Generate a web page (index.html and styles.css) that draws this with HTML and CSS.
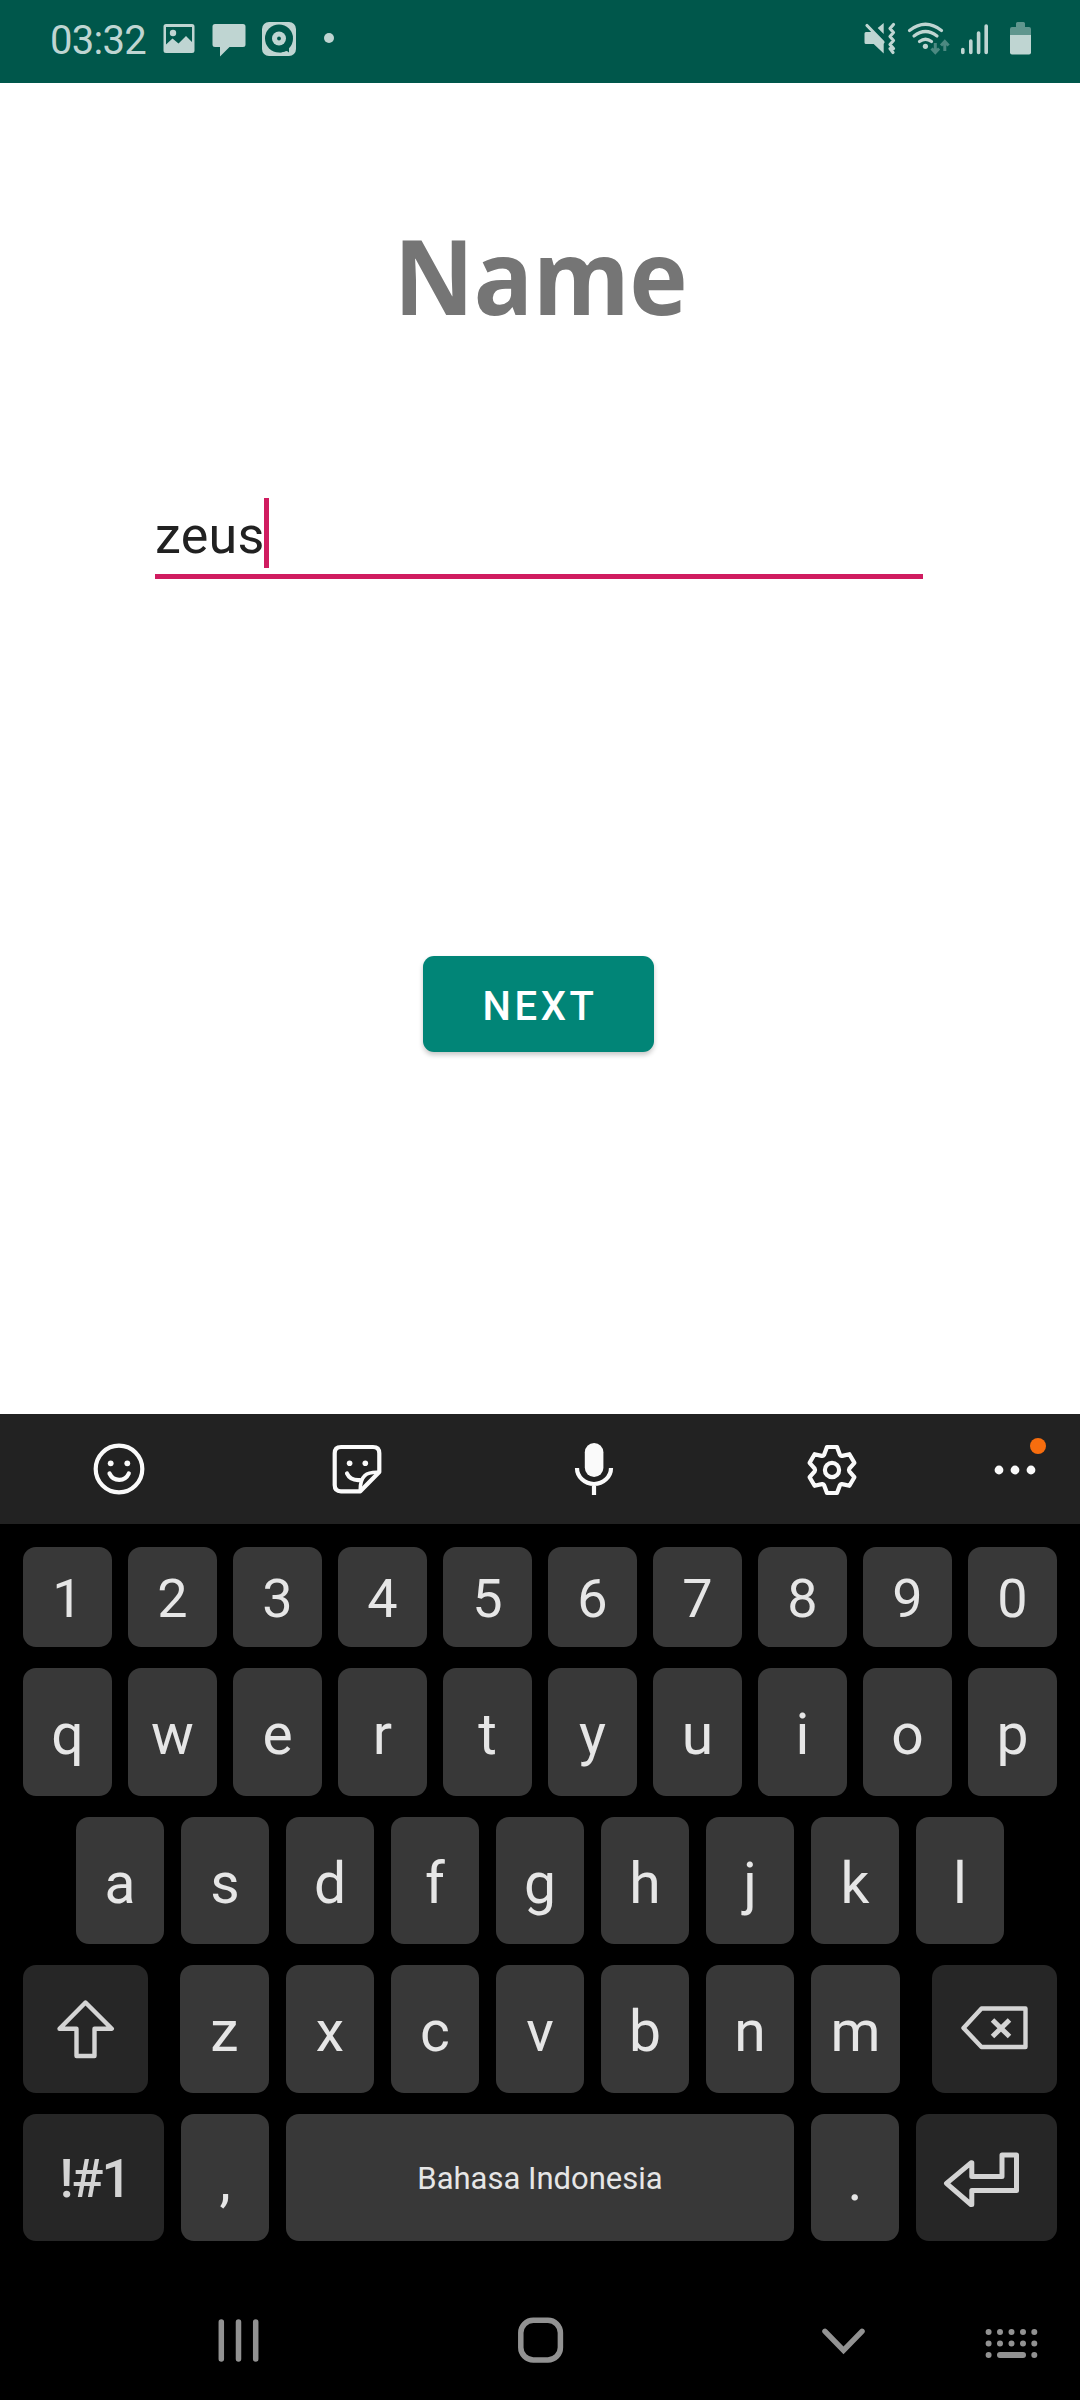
FILE: index.html
```html
<!DOCTYPE html>
<html lang="id">
<head>
<meta charset="utf-8">
<title>Name</title>
<link rel="stylesheet" href="styles.css">
</head>
<body>
<div class="screen">
  <header class="status">
    <span class="clock">03:32</span>
    <svg width="46" height="83" viewBox="158 0 46 83"><path fill-rule="evenodd" d="M166 24h26a2.500 2.500 0 0 1 2.500 2.500v24a2.500 2.500 0 0 1-2.500 2.500h-26a2.500 2.500 0 0 1-2.500-2.500v-24a2.500 2.500 0 0 1 2.500-2.500zM166 27v17.500l6.500-6 6 5 7.500-7.500 6 6v-15z"/><circle cx="173" cy="33" r="3.200"/></svg>
    <svg width="50" height="83" viewBox="204 0 50 83"><path d="M215 24h28a2.500 2.500 0 0 1 2.500 2.500v18a2.500 2.500 0 0 1-2.500 2.500h-13.500l-9.500 9.500v-9.500h-5a2.500 2.500 0 0 1-2.500-2.500v-18a2.500 2.500 0 0 1 2.500-2.500z"/></svg>
    <svg width="50" height="83" viewBox="254 0 50 83"><rect x="262" y="22" width="34" height="34" rx="7"/><circle class="hole" cx="279" cy="38.500" r="14"/><path class="hole" d="M279 52.500c4 0 6-1.500 8-1.500l2 1.500v-5z"/><circle cx="279" cy="38.500" r="7"/><circle class="hole" cx="279" cy="38.500" r="1.900"/></svg>
    <svg width="50" height="83" viewBox="304 0 50 83"><circle cx="329" cy="38" r="5"/></svg>
    <span class="spacer"></span>
    <svg width="40" height="83" viewBox="860 0 40 83"><path d="M866 32h8l9.700 10v11.500l-10-9.500h-7.700a1.500 1.500 0 0 1-1.500-1.500v-9a1.500 1.500 0 0 1 1.500-1.500zM883.700 23v11l-6-6z"/><path class="line" stroke-width="3.200" d="M867 25.500l16 16.500M893.500 24.500l-3.500 4 3.500 4-3.500 4 3.500 4-3.500 4 3.500 4-3.500 0 3 4"/></svg>
    <svg width="55" height="83" viewBox="900 0 55 83"><path class="line" stroke-width="3.200" d="M909.500 30.500q16-12.500 32 0M914 36q11.500-9 23 0M919.500 41.500q6-4.500 12 0"/><circle cx="925.400" cy="46.300" r="2.600"/><path class="faint" stroke-width="3" d="M935.300 43v9M931.500 48.500l3.800 4 3.800-4M944.800 51v-9M941 45.500l3.800-4 3.800 4"/></svg>
    <svg width="40" height="83" viewBox="955 0 40 83"><path class="line" stroke-width="3.600" d="M962.800 49.500v3M970.800 41v11.500M978.600 33v19.500M986.200 26v26.500"/></svg>
    <svg width="50" height="83" viewBox="995 0 50 83"><path opacity=".5" d="M1010 35v-6q0-2 2-2h4v-3.500q0-1.500 1.500-1.500h6q1.500 0 1.500 1.500v3.500h4q2 0 2 2v6z"/><path d="M1010 35h21v17.500q0 2-2 2h-17q-2 0-2-2z"/></svg>
  </header>

  <main class="page">
    <h1 class="title">Name</h1>
    <div class="field"><span class="value">zeus</span><span class="caret"></span></div>
    <button class="next">NEXT</button>
  </main>

  <section class="keyboard">
    <div class="tools">
      <svg width="238" height="110" viewBox="0 1414 238 110"><g class="stroke"><circle cx="119" cy="1469" r="23.300"/><path d="M109.500 1473.500c4 8.500 15.500 8.500 19.300 0"/></g><circle cx="110.700" cy="1463.300" r="2.900"/><circle cx="127.300" cy="1463.300" r="2.900"/></svg>
      <svg width="238" height="110" viewBox="238 1414 238 110"><g class="stroke"><path d="M341 1447h32q6.300 0 6.300 6.300v18.700l-19 19.300h-19.300q-6.300 0-6.300-6.300v-31.700q0-6.300 6.300-6.300z"/><path stroke-width="3.600" d="M378.500 1472.300c-12-.5-18.500 3-18.300 18.500"/><path d="M347 1473.500c2.500 5.500 7 7 13 6.500"/></g><circle cx="349.600" cy="1463.300" r="2.800"/><circle cx="365.300" cy="1463.300" r="2.800"/></svg>
      <svg width="238" height="110" viewBox="476 1414 238 110"><rect x="584.800" y="1443" width="18.600" height="34" rx="9.300"/><path class="stroke butt" d="M577 1468a17 16 0 0 0 34 0M594 1484v11"/></svg>
      <svg width="238" height="110" viewBox="714 1414 238 110"><g class="stroke" transform="translate(832 1470)"><path d="M-5-23H5L8-15Q8.800-13.700 10.300-14.100L17.400-15.800 22.400-7.200 17.300-1.300Q16.600 0 17.300 1.300L22.400 7.200 17.400 15.800 10.300 14.100Q8.800 13.700 8 15L5 23H-5L-8 15Q-8.800 13.700-10.300 14.100L-17.400 15.800-22.400 7.200-17.300 1.300Q-16.600 0-17.300-1.300L-22.400-7.200-17.400-15.800-10.300-14.100Q-8.800-13.700-8-15Z"/><circle r="7.100"/></g></svg>
      <svg width="128" height="110" viewBox="952 1414 128 110"><circle cx="999" cy="1470" r="4.400"/><circle cx="1015" cy="1470" r="4.400"/><circle cx="1031" cy="1470" r="4.400"/><circle class="alert" cx="1038" cy="1446" r="8"/></svg>
    </div>

    <div class="keys">
      <div class="row digits"><span class="key">1</span><span class="key">2</span><span class="key">3</span><span class="key">4</span><span class="key">5</span><span class="key">6</span><span class="key">7</span><span class="key">8</span><span class="key">9</span><span class="key">0</span></div>
      <div class="row top"><span class="key">q</span><span class="key">w</span><span class="key">e</span><span class="key">r</span><span class="key">t</span><span class="key">y</span><span class="key">u</span><span class="key">i</span><span class="key">o</span><span class="key">p</span></div>
      <div class="row home"><span class="key">a</span><span class="key">s</span><span class="key">d</span><span class="key">f</span><span class="key">g</span><span class="key">h</span><span class="key">j</span><span class="key">k</span><span class="key">l</span></div>
      <div class="row lower">
        <span class="key dark"><svg width="125" height="128" viewBox="23 1965 125 128"><path d="M85.500 2002.500l26.300 26.300H94.500V2056h-18v-27.200H59.500z"/></svg></span>
        <div class="letters"><span class="key">z</span><span class="key">x</span><span class="key">c</span><span class="key">v</span><span class="key">b</span><span class="key">n</span><span class="key">m</span></div>
        <span class="key dark"><svg width="125" height="128" viewBox="932 1965 125 128"><path d="M963.500 2028l18-19.500h44v38.500h-44z"/><path class="butt" stroke-width="5" d="M992.500 2020l17 16.500M1009.500 2020l-17 16.500"/></svg></span>
      </div>
      <div class="row bottom">
        <span class="key dark symbols">!#1</span>
        <span class="key">,</span>
        <span class="key space">Bahasa Indonesia</span>
        <span class="key">.</span>
        <span class="key dark"><svg width="141" height="127" viewBox="916 2114 141 127"><path stroke-width="5" d="M946.500 2183.300l24.500-20.500 .8 0v13.700h30.200V2155h14.500v35.500h-44.700v14l-.8 0z"/></svg></span>
      </div>
    </div>

    <nav class="nav">
      <svg width="340" height="120" viewBox="68 2280 340 120"><path d="M221.300 2322v37M238.500 2322v37M255.700 2322v37"/></svg>
      <svg width="264" height="120" viewBox="408 2280 264 120"><rect x="520.800" y="2320.300" width="39.600" height="39.600" rx="12.500"/></svg>
      <svg width="270" height="120" viewBox="708 2280 270 120"><path d="M825 2331.300l18.500 19 18.500-19"/></svg>
      <svg width="102" height="120" viewBox="978 2280 102 120"><path stroke-width="6" d="M988.600 2332h0M1000 2332h0M1011.500 2332h0M1023 2332h0M1034.300 2332h0M988.600 2343.500h0M1000 2343.500h0M1011.500 2343.500h0M1023 2343.500h0M1034.300 2343.500h0M988.600 2355h0M1000 2355H1023M1034.300 2355h0"/></svg>
    </nav>
  </section>
</div>
</body>
</html>
```
FILE: styles.css
```css
* { box-sizing: border-box; }

body {
  margin: 0;
  font-family: Roboto, "Liberation Sans", sans-serif;
}

svg { display: block; flex: none; }

.screen {
  display: flex;
  flex-direction: column;
  width: 1080px;
  height: 2400px;
  background: #fff;
}

/* Status bar */
.status {
  display: flex;
  height: 83px;
  padding: 0 35px 0 50px;
  background: #00574b;
  fill: #bfd5d2;
}

.clock {
  width: 108px;
  padding-top: 1px;
  font-size: 40px;
  line-height: 80px;
  letter-spacing: -.7px;
  color: #bfd5d2;
  white-space: nowrap;
}

.spacer { flex: 1; }
.hole { fill: #00574b; }

.line,
.faint {
  fill: none;
  stroke: #bfd5d2;
  stroke-linecap: round;
  stroke-linejoin: round;
}

.faint { stroke: #4c8981; stroke-linecap: butt; stroke-linejoin: miter; }

/* Form */
.page {
  display: flex;
  flex-direction: column;
  align-items: center;
  height: 1331px;
}

.title {
  margin: 117px 0 0;
  font: bold 104px/150px "Open Sans", "Noto Sans", sans-serif;
  letter-spacing: -.5px;
  color: #757575;
  transform: scaleX(.95);
}

.field {
  display: flex;
  width: 768px;
  height: 81px;
  margin-top: 148px;
  margin-right: 2px;
  border-bottom: 5px solid #d01c60;
}

.value {
  width: 109px;
  font-size: 52px;
  line-height: 75px;
  letter-spacing: .3px;
  color: #212121;
}

.caret { width: 5px; height: 70px; background: #d01c60; }

.next {
  width: 231px;
  height: 96px;
  margin: 377px 3px 0 0;
  padding: 5px 0 0 3px;
  border: 0;
  border-radius: 11px;
  background: #018577;
  box-shadow: 0 3px 5px rgba(0, 0, 0, .22);
  font: 500 40px/1 Roboto, sans-serif;
  letter-spacing: 3.6px;
  color: #fff;
}

/* Keyboard */
.keyboard { height: 986px; background: #000; }

.tools {
  display: flex;
  height: 110px;
  background: #222;
  fill: #fafafa;
}

.stroke {
  fill: none;
  stroke: #fafafa;
  stroke-width: 4.2px;
  stroke-linecap: round;
  stroke-linejoin: round;
}

.butt { stroke-linecap: butt; }
.alert { fill: #f76d0e; }

.keys {
  display: flex;
  flex-direction: column;
  gap: 21px;
  height: 756px;
  padding: 23px 23px 0;
}

.row { display: flex; justify-content: space-between; height: 127px; }
.row.digits { height: 100px; }
.row.top,
.row.lower { height: 128px; }
.row.home { padding: 0 53px; }

.letters { display: flex; justify-content: space-between; width: 720px; }

.key {
  display: flex;
  align-items: center;
  justify-content: center;
  width: 89px;
  padding-top: 5px;
  border-radius: 13px;
  background: #383838;
  font-size: 57px;
  color: #e6e6e6;
}

.digits .key { padding-top: 3px; font-size: 54px; }
.home .key,
.bottom .key,
.letters .key:not(:first-child):not(:last-child) { width: 88px; }

.key.dark { width: 125px; padding: 0; background: #262626; color: #d4d4d4; }
.bottom .key.dark { width: 141px; }
.bottom .key.symbols {
  padding: 2px 0 0 2px;
  font-size: 53px;
  font-weight: 500;
  letter-spacing: -2px;
}
.bottom .key.space { width: 508px; padding-top: 2px; font-size: 31px; }

.key svg {
  fill: none;
  stroke: #d4d4d4;
  stroke-width: 4.4px;
  stroke-linejoin: round;
}

/* Navigation bar */
.nav {
  display: flex;
  justify-content: flex-end;
  height: 120px;
  fill: none;
  stroke: #929292;
  stroke-width: 5.5px;
  stroke-linecap: round;
}

.nav svg:nth-child(2) { margin-right: 36px; }
```
